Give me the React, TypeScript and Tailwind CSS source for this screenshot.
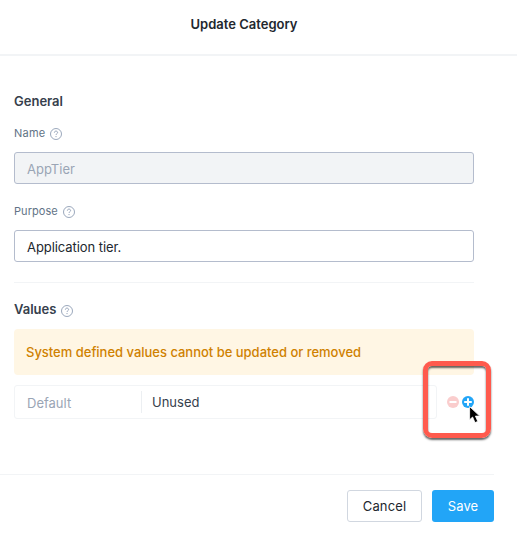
import React from "react";

function Help() {
  return (
    <svg width="12" height="12" viewBox="0 0 12 12" fill="none" stroke="#8292ab" className="mt-[2px] block shrink-0">
      <circle cx="6" cy="6" r="5.5" strokeWidth="0.8" />
      <path d="M4.4 4.7C4.4 3.7 5 3.1 6 3.1S7.6 3.8 7.6 4.6C7.6 5.7 6 5.8 6 7" strokeWidth="0.8" />
      <path d="M6 8.1v1" strokeWidth="0.9" />
    </svg>
  );
}

export default function App() {
  return (
    <div className="relative h-[542px] w-[517px] overflow-hidden bg-white font-['Inter',sans-serif] text-[13px] text-[#22272e]">
      <header className="flex h-14 items-center justify-center border-b-2 border-[#f2f4f6] pb-[6px] pr-[29px]">
        <h1 className="font-semibold leading-5">Update Category</h1>
      </header>
      <main className="ml-[14px] w-[460px] pt-[35px]">
        <h2 className="h-5 font-semibold leading-5 text-[#36404c]">General</h2>
        <label className="mt-3 flex h-5 items-center gap-[5px] text-[11px] tracking-[0.02em] text-[#627386]">
          Name <Help />
        </label>
        <div className="mt-[9px] flex h-8 items-center rounded-[3px] border border-[#b4bccd] bg-[#f2f4f6] px-3 pt-[3px] text-[#9aa5b5]">AppTier</div>
        <label className="mt-[17px] flex h-5 items-center gap-[5px] text-[11px] tracking-[0.005em] text-[#627386]">
          Purpose <Help />
        </label>
        <div className="mt-[9px] flex h-8 items-center rounded-[3px] border border-[#b4bccd] px-3 pt-[3px] tracking-[-0.005em]">Application tier.</div>
        <hr className="mt-5 border-[#f2f4f6]" />
        <h2 className="mt-[17px] flex h-5 items-center gap-[5px] font-semibold text-[#36404c]">
          Values <Help />
        </h2>
        <div className="mt-[9px] flex h-[46px] items-center rounded-[4px] bg-[#fff6e4] px-3 pt-[2px] font-medium tracking-[-0.001em] text-[#cf8100]">System defined values cannot be updated or removed</div>
        <div className="mt-[10px] flex h-[34px] items-center">
          <div className="flex h-full w-[423px] shrink-0 items-center rounded-[3px] border border-[#f2f4f6]">
            <span className="w-[126px] pl-3 pt-[3px] text-[#9aa5b5]">Default</span>
            <span className="flex h-[22px] items-center border-l border-[#eceff2] pl-[10px] pt-[2px] text-[#36404c]">Unused</span>
          </div>
          <svg width="28" height="12" viewBox="0 0 28 12" className="ml-[10px] shrink-0">
            <circle cx="6" cy="6" r="6" fill="#facdcd" />
            <path d="M2.5 6h7" stroke="#fff" strokeWidth="2" />
            <circle cx="21" cy="6" r="6" fill="#22a5f7" />
            <path d="M17.2 6h7.6M21 2.2v7.6" stroke="#fff" strokeWidth="2" />
          </svg>
        </div>
      </main>
      <footer className="mt-[55px] flex w-[494px] justify-end gap-[10px] border-t border-[#f2f4f6] pt-[15px]">
        <button className="h-8 w-[75px] rounded-[3px] border border-[#d1d7e0] pt-[2px] tracking-[0.01em]">Cancel</button>
        <button className="h-8 w-[62px] rounded-[3px] bg-[#22a5f7] pt-[2px] tracking-[0.01em] text-white">Save</button>
      </footer>
      <div className="absolute left-[423px] top-[361px] h-[77px] w-[68px] rounded-[9px] border-[5px] border-[#ff5a4d] shadow-[0_2px_2px_#0009,inset_0_2px_2px_#0009]" />
      <svg className="absolute left-[469px] top-[406px]" width="13" height="18" viewBox="0 0 13 18">
        <path d="M.6.6v13.2l3-2.8 2.4 5.6 2.8-1.2-2.4-5.3h4.3z" fill="#000" stroke="#fff" strokeWidth=".8" />
      </svg>
    </div>
  );
}
